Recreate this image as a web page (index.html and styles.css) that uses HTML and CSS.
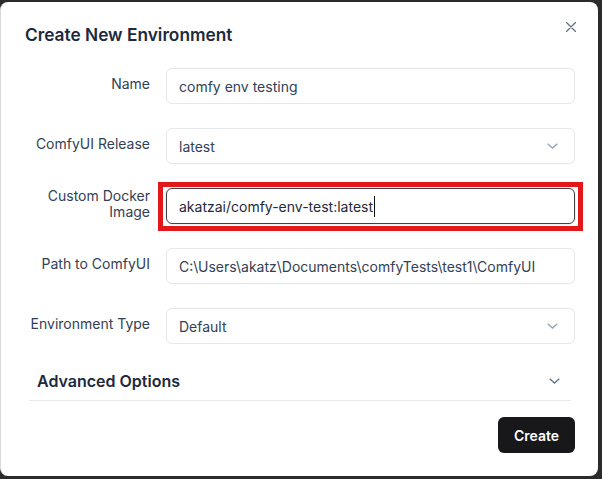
FILE: index.html
```html
<!DOCTYPE html>
<html>
<head>
<meta charset="utf-8">
<link rel="stylesheet" href="styles.css">
</head>
<body>
<div class="dialog">
  <button class="close" aria-label="Close">
    <svg width="10" height="10" viewBox="0 0 10 10"><path d="M0.5 0.5L9.5 9.5M9.5 0.5L0.5 9.5" stroke="#64748b" stroke-width="1.4" stroke-linecap="round"/></svg>
  </button>
  <h2 class="title">Create New Environment</h2>
  <div class="form">
    <div class="label">Name</div>
    <div class="field"><span class="value">comfy env testing</span></div>

    <div class="label">ComfyUI Release</div>
    <div class="field select"><span class="value">latest</span>
      <svg class="chev" width="11" height="6" viewBox="0 0 11 6"><path d="M0.7 0.7L5.5 5.1L10.3 0.7" fill="none" stroke="#94a3b8" stroke-width="1.3"/></svg>
    </div>

    <div class="label">Custom Docker<br>Image</div>
    <div class="field focused"><span class="value dark">akatzai/comfy-env-test:latest</span><span class="caret"></span>
      <div class="highlight"></div>
    </div>

    <div class="label">Path to ComfyUI</div>
    <div class="field"><span class="value">C:\Users\akatz\Documents\comfyTests\test1\ComfyUI</span></div>

    <div class="label">Environment Type</div>
    <div class="field select"><span class="value">Default</span>
      <svg class="chev" width="11" height="6" viewBox="0 0 11 6"><path d="M0.7 0.7L5.5 5.1L10.3 0.7" fill="none" stroke="#94a3b8" stroke-width="1.3"/></svg>
    </div>
  </div>
  <div class="advanced">
    <span>Advanced Options</span>
    <svg width="11" height="6" viewBox="0 0 11 6"><path d="M0.7 0.7L5.5 5.1L10.3 0.7" fill="none" stroke="#64748b" stroke-width="1.3"/></svg>
  </div>
  <div class="footer">
    <button class="create">Create</button>
  </div>
</div>
</body>
</html>
```

FILE: styles.css
```css
* { box-sizing: border-box; }
html, body { margin: 0; padding: 0; }
body {
  background: #2b2b2b;
  width: 602px;
  height: 479px;
  overflow: hidden;
  font-family: Inter, "Noto Sans", sans-serif;
}
.dialog {
  position: relative;
  margin-top: 2px;
  width: 598px;
  height: 474px;
  background: #fff;
  border-radius: 8px;
  border-left: 1px solid #d9d9d9;
  padding: 19px 23px 23px 24px;
}
.close {
  position: absolute;
  top: 20px;
  right: 22px;
  width: 10px;
  height: 10px;
  padding: 0;
  border: 0;
  background: none;
  display: flex;
}
.title {
  margin: 0;
  font-size: 17.3px;
  line-height: 28px;
  font-weight: 600;
  color: #1e293b;
}
.form {
  margin-top: 19px;
  margin-left: 4px;
  display: grid;
  grid-template-columns: 121px 409px;
  grid-auto-rows: 36px;
  column-gap: 16px;
  row-gap: 24px;
}
.label {
  display: flex;
  align-items: center;
  justify-content: flex-end;
  text-align: right;
  font-size: 14px;
  line-height: 15.5px;
  color: #334155;
  padding-bottom: 5px;
}
.field {
  position: relative;
  height: 36px;
  border: 1px solid #e5e7eb;
  border-radius: 6px;
  display: flex;
  align-items: center;
  padding: 0 12px;
}
.value {
  font-size: 14px;
  color: #334155;
  white-space: nowrap;
}
.value.dark { color: #1e293b; }
.field.focused {
  border-color: #3f3f46;
  box-shadow: 0 0 0 1px rgba(0,0,0,0.05);
}
.caret {
  display: inline-block;
  width: 1px;
  height: 21px;
  background: #111;
  margin-left: 1px;
}
.highlight {
  position: absolute;
  left: -9px;
  top: -7px;
  right: -9px;
  bottom: -8px;
  border: 5px solid #e3181b;
  pointer-events: none;
}
.select { justify-content: space-between; padding-right: 16px; }
.advanced {
  margin: 17px 4px 0 4px;
  height: 40px;
  border-bottom: 1.5px solid #e7e9ec;
  display: flex;
  align-items: center;
  justify-content: space-between;
  padding: 0 11px 0 8px;
  font-size: 16px;
  font-weight: 600;
  color: #1e293b;
}
.footer {
  margin-top: 16px;
  display: flex;
  justify-content: flex-end;
}
.create {
  width: 77px;
  height: 36px;
  border: 0;
  border-radius: 6px;
  background: #18181b;
  color: #fff;
  font-family: Inter, "Noto Sans", sans-serif;
  font-size: 14px;
  font-weight: 600;
}
```
